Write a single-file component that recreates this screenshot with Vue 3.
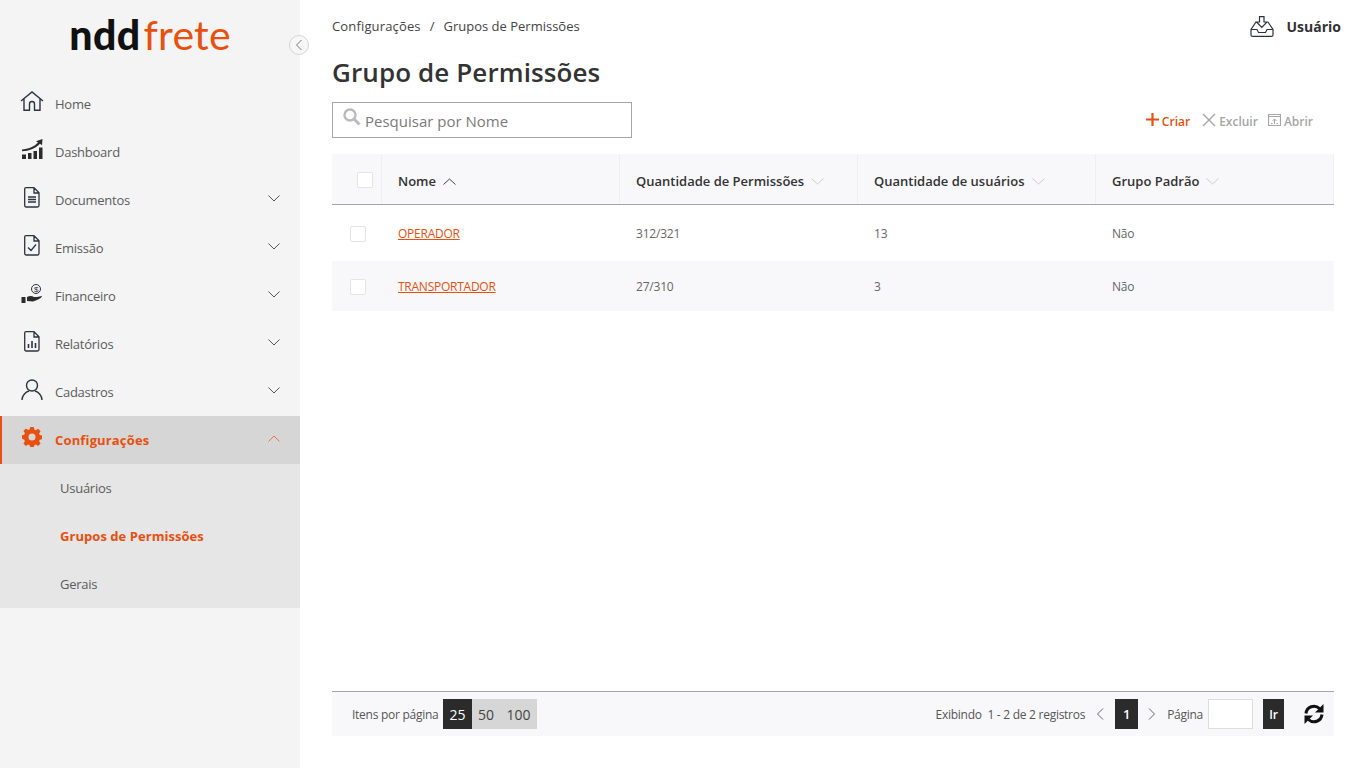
<script setup>
const menu = [
  { label: 'Home', icon: 'home' },
  { label: 'Dashboard', icon: 'chart' },
  { label: 'Documentos', icon: 'doc', arrow: true },
  { label: 'Emissão', icon: 'check', arrow: true },
  { label: 'Financeiro', icon: 'money', arrow: true },
  { label: 'Relatórios', icon: 'report', arrow: true },
  { label: 'Cadastros', icon: 'user', arrow: true },
]
const subs = [
  { label: 'Usuários' },
  { label: 'Grupos de Permissões', active: true },
  { label: 'Gerais' },
]
const rows = [
  { nome: 'OPERADOR', perms: '312/321', users: '13', padrao: 'Não' },
  { nome: 'TRANSPORTADOR', perms: '27/310', users: '3', padrao: 'Não' },
]
</script>

<template>
  <div class="page">
    <aside class="side">
      <div class="logo"><span class="logo-a">ndd</span><span class="logo-b">frete</span></div>
      <button class="collapse" aria-label="Recolher">
        <svg width="8" height="12" viewBox="0 0 8 12"><path d="M6.500 1 1.500 6l5 5" fill="none" stroke="#777" stroke-width="1"/></svg>
      </button>
      <nav class="nav">
        <a v-for="m in menu" :key="m.label" class="item">
          <span class="ic">
            <svg v-if="m.icon === 'home'" width="24" height="20" viewBox="0 0 24 20" fill="none" stroke="#2b3340" stroke-width="1.400"><path d="M1 10 12 1l11 9M4 7.500V19.200h5.500V13a2.500 2.500 0 0 1 5 0v6.200H20V7.500"/></svg>
            <svg v-else-if="m.icon === 'chart'" width="22" height="20" viewBox="0 0 22 20" fill="#2b2b2b"><path d="M1 10.500C7 10 13 8 17 3.500L15 2.200 21.500 0 21 6.200l-2-1.400C14 10 8 12 1 12.300z"/><rect x="1" y="15.500" width="4" height="4.500"/><rect x="7" y="14" width="3.500" height="6"/><rect x="12.500" y="12" width="3.500" height="8"/><rect x="18" y="8.500" width="3.500" height="11.500"/></svg>
            <svg v-else-if="m.icon === 'doc'" width="16" height="21" viewBox="0 0 16 21" fill="none" stroke="#2b3340" stroke-width="1.300"><path d="M2 .7h8l5 5v12.800a1.500 1.500 0 0 1-1.500 1.500h-11.500A1.500 1.500 0 0 1 .7 18.500V2A1.300 1.300 0 0 1 2 .7zM10 1v5h5M4 10h8M4 12.500h8M4 15h8"/></svg>
            <svg v-else-if="m.icon === 'check'" width="16" height="21" viewBox="0 0 16 21" fill="none" stroke="#2b3340" stroke-width="1.300"><path d="M2 .7h8l5 5v12.800a1.500 1.500 0 0 1-1.500 1.500h-11.500A1.500 1.500 0 0 1 .7 18.500V2A1.300 1.300 0 0 1 2 .7zM10 1v5h5M4 12.500l3 3 5-6"/></svg>
            <svg v-else-if="m.icon === 'money'" width="22" height="20" viewBox="0 0 22 20" fill="none"><circle cx="15" cy="6" r="4.500" stroke="#2b3340"/><text x="15" y="9" text-anchor="middle" font-size="8" font-family="Liberation Sans" fill="#2b3340">$</text><rect x="0.500" y="14" width="4" height="6" fill="#2b2b2b"/><path d="M6 14c3-1.500 5-1 7 0h3l5-1c0 1-2 3-5 4l-4 1.500-6-.5z" fill="#2b2b2b"/></svg>
            <svg v-else-if="m.icon === 'report'" width="16" height="21" viewBox="0 0 16 21" fill="none" stroke="#2b3340" stroke-width="1.300"><path d="M2 .7h8l5 5v12.800a1.500 1.500 0 0 1-1.500 1.500h-11.500A1.500 1.500 0 0 1 .7 18.500V2A1.300 1.300 0 0 1 2 .7zM10 1v5h5"/><path d="M4.500 17v-4M8 17V10M11.500 17v-5" stroke-width="1.600"/></svg>
            <svg v-else width="22" height="21" viewBox="0 0 22 21" fill="none" stroke="#2b3340" stroke-width="1.400"><circle cx="11" cy="6.500" r="5.500"/><path d="M1 21c0-4.500 3.500-8 7-9M21 21c0-4.500-3.500-8-7-9"/></svg>
          </span>
          <span class="label">{{ m.label }}</span>
          <svg v-if="m.arrow" class="chev" width="12" height="7" viewBox="0 0 12 7"><path d="M.5.500 6 6l5.500-5.500" fill="none" stroke="#555" stroke-width="1"/></svg>
        </a>
        <a class="item current">
          <span class="ic">
            <svg width="20" height="20" viewBox="0 0 20 20" fill="#e8500f"><path fill-rule="evenodd" d="M8.200 0h3.600l.5 2.600 1.600.7 2.200-1.500 2.500 2.500-1.500 2.200.7 1.600 2.200.5v3.600l-2.200.5-.7 1.600 1.500 2.200-2.500 2.500-2.200-1.500-1.600.7-.5 2.200H8.200l-.5-2.200-1.600-.7-2.200 1.500-2.500-2.500 1.500-2.200-.7-1.600L0 11.800V8.200l2.200-.5.700-1.600-1.500-2.200 2.500-2.500 2.200 1.500 1.600-.7zM10 6.500a3.500 3.500 0 1 0 0 7 3.500 3.500 0 0 0 0-7z"/></svg>
          </span>
          <span class="label">Configurações</span>
          <svg class="chev" width="12" height="7" viewBox="0 0 12 7"><path d="M.5 6.500 6 1l5.500 5.500" fill="none" stroke="#e8764a" stroke-width="1"/></svg>
        </a>
        <div class="subs">
          <a v-for="s in subs" :key="s.label" class="sub" :class="{ on: s.active }">{{ s.label }}</a>
        </div>
      </nav>
    </aside>

    <main class="main">
      <header class="top">
        <div class="crumbs"><span class="c1">Configurações</span><span class="sep">/</span><span>Grupos de Permissões</span></div>
        <div class="account">
          <svg width="24" height="21" viewBox="0 0 24 21" fill="none" stroke="#2b3340" stroke-width="1.200"><path d="M9.500 .6h4.500v5.400h3L11.800 11.500 6.500 6h3zM6 6 1 13.500v5.500A1.500 1.500 0 0 0 2.500 20.400h19a1.500 1.500 0 0 0 1.500-1.400V13.500L18 6M1 13.500h6l1.500 3h7l1.500-3h6"/></svg>
          <strong>Usuário</strong>
        </div>
      </header>
      <h1>Grupo de Permissões</h1>
      <div class="tools">
        <label class="search">
          <svg width="18" height="18" viewBox="0 0 18 18" fill="none" stroke="#bbb"><circle cx="7" cy="7" r="5.500" stroke-width="2.400"/><path d="M11 11l5.500 5.500" stroke-width="3"/></svg>
          <input placeholder="Pesquisar por Nome" />
        </label>
        <div class="actions">
          <a class="act create"><svg width="13" height="13" viewBox="0 0 13 13"><path d="M6.500 0v13M0 6.500h13" stroke="#e8500f" stroke-width="2.200"/></svg>Criar</a>
          <a class="act"><svg width="14" height="14" viewBox="0 0 14 14"><path d="M1 1l12 12M13 1 1 13" stroke="#a6a6a6" stroke-width="1.400"/></svg>Excluir</a>
          <a class="act open"><svg width="13" height="12" viewBox="0 0 13 12" fill="none" stroke="#a6a6a6"><path d="M.5.500h12v11H.5zM.5 2.500h12" stroke-width="1.200"/><path d="M6.500 10V5M4.500 7l2-2 2 2M3 9.500h1.500M8.500 9.500H10" stroke-width="1"/></svg>Abrir</a>
        </div>
      </div>

      <div class="table">
        <div class="tr head">
          <div class="c check"><span class="box"></span></div>
          <div class="c nome"><b>Nome</b><svg width="13" height="7" viewBox="0 0 13 7"><path d="M.5 6.500 6.500 1l6 5.500" fill="none" stroke="#444"/></svg></div>
          <div class="c perms"><b>Quantidade de Permissões</b><svg width="13" height="7" viewBox="0 0 13 7"><path d="M.5.500l6 5.500 6-5.500" fill="none" stroke="#ccc"/></svg></div>
          <div class="c users"><b>Quantidade de usuários</b><svg width="13" height="7" viewBox="0 0 13 7"><path d="M.5.500l6 5.500 6-5.500" fill="none" stroke="#ccc"/></svg></div>
          <div class="c padrao"><b>Grupo Padrão</b><svg width="13" height="7" viewBox="0 0 13 7"><path d="M.5.500l6 5.500 6-5.500" fill="none" stroke="#ccc"/></svg></div>
        </div>
        <div v-for="(r, i) in rows" :key="r.nome" class="tr row" :class="{ alt: i === 1 }">
          <div class="c check"><span class="box"></span></div>
          <div class="c nome"><a>{{ r.nome }}</a></div>
          <div class="c perms">{{ r.perms }}</div>
          <div class="c users">{{ r.users }}</div>
          <div class="c padrao">{{ r.padrao }}</div>
        </div>
      </div>

      <footer class="pager">
        <div class="pg-left">
          <span>Itens por página</span>
          <div class="sizes"><span class="on">25</span><span>50</span><span>100</span></div>
        </div>
        <div class="pg-right">
          <span>Exibindo&nbsp; 1 - 2 de 2 registros</span>
          <svg class="arr prev" width="8" height="12" viewBox="0 0 8 12"><path d="M7 .5 1.500 6 7 11.500" fill="none" stroke="#666"/></svg>
          <span class="cur">1</span>
          <svg class="arr next" width="8" height="12" viewBox="0 0 8 12"><path d="M1 .5 6.500 6 1 11.500" fill="none" stroke="#666"/></svg>
          <span>Página</span>
          <input class="goto" />
          <span class="go">Ir</span>
          <svg class="refresh" width="20" height="20" viewBox="0 0 20 20" fill="none" stroke="#111" stroke-width="3"><path d="M2 9.500A8 8 0 0 1 15.500 4.500"/><path d="M18 10.500A8 8 0 0 1 4.500 15.500"/><path d="M19.500 0v8.500H11z" fill="#111" stroke="none"/><path d="M.5 20v-8.500H9z" fill="#111" stroke="none"/></svg>
        </div>
      </footer>
    </main>
  </div>
</template>

<style>
html, body { margin: 0; background: #fff; }
</style>

<style scoped>
.page { display: flex; width: 1366px; height: 768px; overflow: hidden; font-family: "Open Sans", "Noto Sans", sans-serif; color: #444; font-size: 12px; }
a { text-decoration: none; }
.side { position: relative; flex: 0 0 300px; background: #f4f4f4; }
.logo { height: 80px; display: flex; justify-content: center; align-items: center; font-family: Lato, sans-serif; font-size: 41px; line-height: 1; padding-bottom: 11px; box-sizing: border-box; }
.logo-a { color: #111; font-weight: 900; letter-spacing: .4px; }
.logo-b { color: #e8500f; font-weight: 400; margin-left: 3px; letter-spacing: .2px; }
.collapse { position: absolute; right: -9px; top: 35px; width: 20px; height: 20px; border-radius: 50%; border: 1px solid #d5d5d5; background: #f7f7f7; padding: 0; display: flex; align-items: center; justify-content: center; }
.nav { display: flex; flex-direction: column; }
.item { height: 48px; display: flex; align-items: center; padding-left: 20px; padding-right: 20px; position: relative; color: #5c5c5c; font-size: 13px; letter-spacing: -.25px; }
.ic { width: 24px; margin-right: 11px; display: flex; justify-content: center; margin-top: -6px; flex: none; }
.label { flex: 1; }
.chev { margin-top: -4px; }
.current { background: #d6d6d6; border-left: 2px solid #e8500f; padding-left: 18px; color: #e8500f; font-weight: 700; letter-spacing: .15px; }
.subs { background: #e6e6e6; }
.sub { height: 48px; display: flex; align-items: center; padding-left: 60px; color: #5c5c5c; font-size: 13px; letter-spacing: -.25px; }
.sub.on { color: #e8500f; font-weight: 700; letter-spacing: .05px; }
.main { flex: 1; padding: 0 32px; box-sizing: border-box; display: flex; flex-direction: column; min-width: 0; }
.top { display: flex; justify-content: space-between; align-items: center; height: 52px; flex: none; }
.crumbs { display: flex; gap: 9px; font-size: 13px; color: #444; }
.c1 { letter-spacing: .15px; }
.account { display: flex; align-items: center; gap: 13px; margin-right: -7px; color: #333; font-size: 14px; }
.account strong { font-weight: 700; letter-spacing: 0; }
h1 { margin: 0; font-size: 26px; font-weight: 600; color: #333; line-height: 40px; letter-spacing: .1px; }
.tools { display: flex; justify-content: space-between; align-items: center; margin-top: 10px; height: 36px; flex: none; }
.search { width: 300px; height: 36px; box-sizing: border-box; border: 1px solid #a6a6a6; display: flex; align-items: center; padding-left: 10px; gap: 2px; }
.search svg { margin-top: -6px; flex: none; }
.search input { border: 0; outline: 0; flex: 1; min-width: 0; font: inherit; font-size: 15px; background: transparent; color: #444; padding: 2px 0 0 2px; }
.search input::placeholder { color: #7b7b7b; opacity: 1; }
.actions { display: flex; align-items: center; gap: 12px; margin-right: 21px; margin-top: 2px; font-size: 12px; font-weight: 600; color: #a6a6a6; }
.act { display: flex; align-items: center; gap: 3px; }
.act svg { margin-top: -3px; }
.open { margin-left: -2px; }
.create { color: #e8500f; }
.table { margin-top: 16px; flex: 1; }
.tr { display: flex; box-sizing: border-box; }
.c { display: flex; align-items: center; box-sizing: border-box; padding-left: 16px; }
.check { width: 50px; padding-left: 0; }
.nome { width: 238px; }
.perms { width: 238px; }
.users { width: 238px; }
.padrao { flex: 1; }
.head { height: 51px; background: #f8f8fa; border-bottom: 1px solid #a6a6a6; font-size: 13px; color: #333; }
.head .c { gap: 7px; border-right: 1px solid #efeff1; padding-top: 4px; }
.head b { font-weight: 600; }
.head .check { justify-content: flex-end; padding-right: 8px; padding-top: 2px; }
.row { font-size: 12px; color: #666; letter-spacing: -.2px; }
.row .check { padding-left: 18px; padding-top: 2px; }
.row:not(.alt) { height: 56px; }
.row.alt { background: #f8f8fa; height: 50px; }
.row .nome a { color: #e8500f; text-decoration: underline; letter-spacing: -.25px; }
.box { width: 16px; height: 16px; box-sizing: border-box; background: #fff; border: 1px solid #e4e4e4; border-radius: 2px; display: block; }
.pager { height: 45px; box-sizing: border-box; flex: none; margin-bottom: 32px; background: #f8f8fa; border-top: 1px solid #a6a6a6; display: flex; justify-content: space-between; align-items: center; padding: 0 10px 0 20px; font-size: 12px; color: #555; letter-spacing: -.27px; }
.pg-left { display: flex; align-items: center; gap: 5px; }
.sizes { display: flex; height: 30px; background: #d6d6d6; font-size: 14px; color: #444; letter-spacing: 0; }
.sizes span { display: flex; align-items: center; padding: 0 6.200px; }
.sizes .on { background: #2b2b2b; color: #fff; }
.pg-right { display: flex; align-items: center; }
.arr.prev { margin: 0 11px 0 11px; }
.arr.next { margin: 0 11px 0 10px; }
.cur { width: 23px; height: 30px; background: #2b2b2b; color: #fff; font-size: 13px; font-weight: 600; display: flex; align-items: center; justify-content: center; }
.goto { width: 45px; height: 30px; box-sizing: border-box; border: 1px solid #ddd; background: #fff; margin: 0 10px 0 5px; padding: 0; }
.go { width: 21px; height: 30px; background: #2b2b2b; color: #fff; font-weight: 600; display: flex; align-items: center; justify-content: center; }
.refresh { margin-left: 20px; }
</style>
